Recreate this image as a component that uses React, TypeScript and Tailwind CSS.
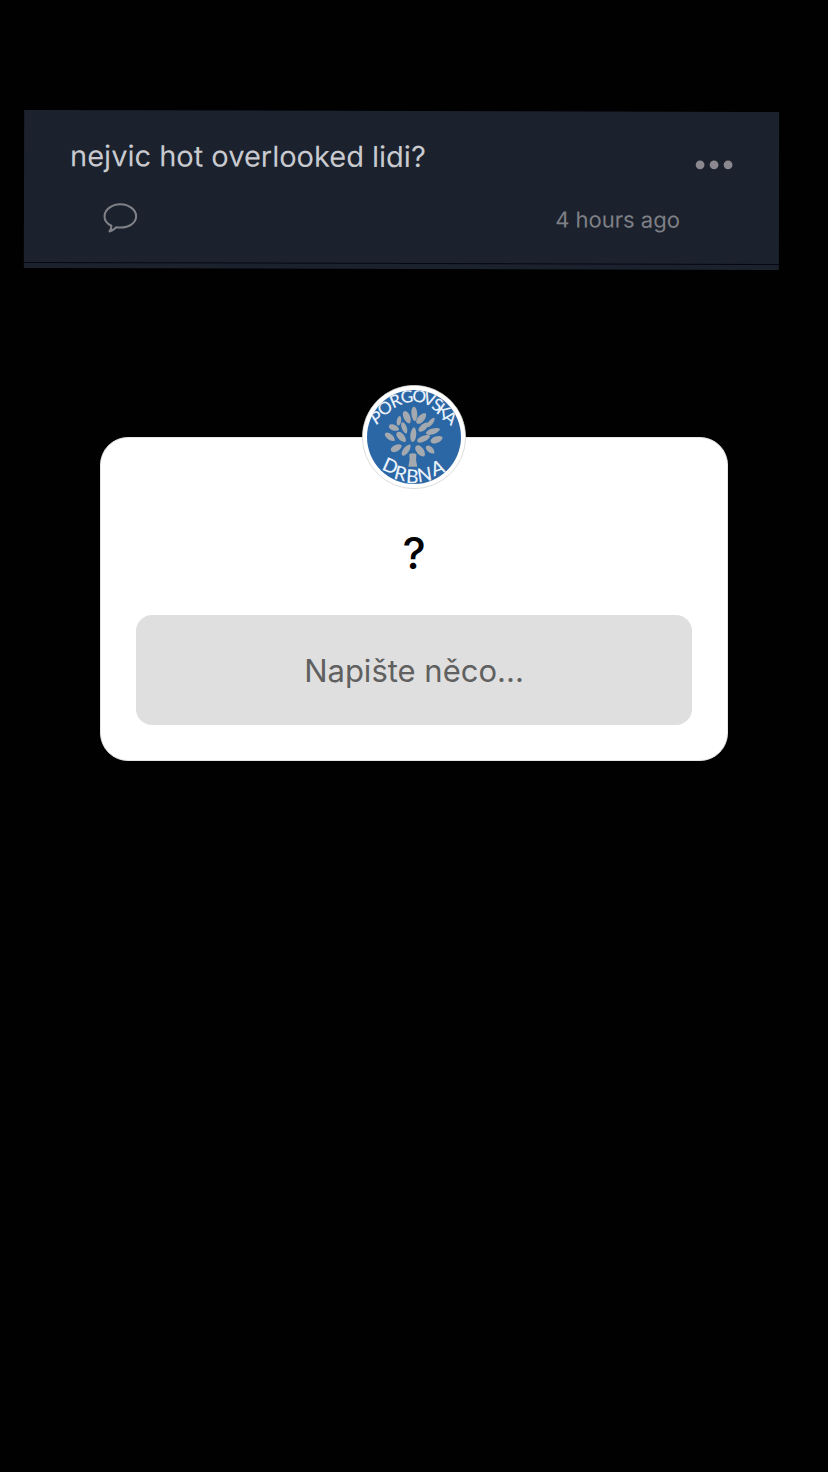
type Glyph = { char: string; x: number; y: number; turn: number };

const topLetters: Glyph[] = [
  { char: 'P', x: 90, y: 141, turn: -32 },
  { char: 'O', x: 115, y: 112, turn: -34 },
  { char: 'R', x: 144, y: 92, turn: -24 },
  { char: 'G', x: 173, y: 81, turn: -6 },
  { char: 'O', x: 206, y: 80, turn: 6 },
  { char: 'V', x: 233, y: 88, turn: 18 },
  { char: 'S', x: 254, y: 104, turn: 28 },
  { char: 'K', x: 270, y: 120, turn: 34 },
  { char: 'Á', x: 290, y: 141, turn: 38 },
];

const bottomLetters: Glyph[] = [
  { char: 'D', x: 113, y: 290, turn: 24 },
  { char: 'R', x: 147, y: 313, turn: 14 },
  { char: 'B', x: 186, y: 323, turn: 3 },
  { char: 'N', x: 227, y: 317, turn: -9 },
  { char: 'A', x: 270, y: 296, turn: -20 },
];

// cx, cy, half length, half width, angle
const leaves: number[][] = [
  [193, 115, 22, 8, 86],
  [171, 125, 20, 9, 66],
  [214, 128, 20, 9, -48],
  [147, 135, 15, 6, -80],
  [243, 140, 17, 6, -52],
  [132, 156, 16, 8, 22],
  [163, 157, 18, 7, 70],
  [221, 154, 19, 8, -42],
  [249, 167, 22, 8, -18],
  [120, 184, 18, 8, 38],
  [154, 184, 19, 9, 48],
  [190, 177, 22, 8, -84],
  [221, 189, 21, 8, -24],
  [260, 192, 19, 9, -20],
  [139, 217, 18, 9, -28],
  [169, 223, 20, 8, -54],
  [211, 226, 20, 10, 52],
  [241, 222, 16, 8, 42],
];

function Letters({ glyphs, size }: { glyphs: Glyph[]; size: number }) {
  return (
    <g fontSize={size} textAnchor="middle" fill="#e9f1fa">
      {glyphs.map((g, i) => (
        <text key={i} transform={`translate(${g.x} ${g.y}) rotate(${g.turn})`}>
          {g.char}
        </text>
      ))}
    </g>
  );
}

function Avatar() {
  return (
    <svg viewBox="36 28 312 312" className="size-26 font-['Lato',sans-serif] font-medium" role="img" aria-label="Porgovská drbna">
      <defs>
        <clipPath id="disc">
          <circle cx="192" cy="184" r="141" />
        </clipPath>
      </defs>
      <circle cx="192" cy="184" r="155" fill="#fff" stroke="#c9cbc8" strokeWidth="2" />
      <circle cx="192" cy="184" r="141" fill="#2b66a5" />
      <g clipPath="url(#disc)">
        <g fill="#a3a9af">
          {leaves.map(([x, y, a, b, t], i) => (
            <path
              key={i}
              transform={`translate(${x} ${y}) rotate(${t})`}
              d={`M${-a} 0C${-a} ${-b * 1.4} ${a * 0.7} ${-b * 1.5} ${a} 0C${a * 0.7} ${b * 1.5} ${-a} ${b * 1.4} ${-a} 0Z`}
            />
          ))}
          <path d="M178 235Q189 231 199 235Q196 253 202 273L175 273Q181 255 178 235Z" />
        </g>
        <Letters glyphs={topLetters} size={52} />
        <Letters glyphs={bottomLetters} size={58} />
      </g>
    </svg>
  );
}

export default function App() {
  return (
    <main className="min-h-screen bg-[#010102] pt-[111px] font-['Inter','Liberation_Sans',sans-serif]">
      <article className="mr-[49px] ml-6 rotate-[0.15deg] bg-[#1c222d] text-[#7f8086]">
        <div className="flex h-[153px] flex-col justify-between border-b border-[#050714] pt-6 pb-7 pl-[46px]">
          <div className="flex items-start justify-between pr-[46px]">
            <h1 className="text-[29px] leading-11 text-[#c8cad0]">nejvic hot overlooked lidi?</h1>
            <button type="button" aria-label="More options" className="mt-6">
              <svg viewBox="0 0 38 10" className="h-[10px] w-[38px]" fill="#8b898f">
                <circle cx="5" cy="5" r="4.4" />
                <circle cx="19" cy="5" r="4.4" />
                <circle cx="33" cy="5" r="4.4" />
              </svg>
            </button>
          </div>
          <div className="flex items-center justify-between pr-[99px] pl-8">
            <button type="button" aria-label="Comment">
              <svg viewBox="0 0 36 32" className="h-8 w-9" fill="none" stroke="#808187" strokeWidth="2" strokeLinejoin="round">
                <path d="M9.5 23.5C5 21.4 2.6 18 2.6 14.2C2.6 7.7 9.5 2 18.3 2S34.2 7.6 34.2 14S27.5 25.3 18.6 25.3Q16.4 25.3 14.4 25Q11.8 27.8 7.6 29.2Q9.7 26.8 9.5 23.5Z" />
              </svg>
            </button>
            <time className="text-[22px] leading-8">4 hours ago</time>
          </div>
        </div>
        <div className="h-[5px]" />
      </article>

      <form className="mx-[100px] mt-[116px] flex flex-col items-center" onSubmit={(e) => e.preventDefault()}>
        <div className="z-10 -mb-13">
          <Avatar />
        </div>
        <div className="w-full rounded-[28px] border border-[#e4e6e4] bg-white px-[35px] pt-[85px] pb-[35px]">
          <label htmlFor="answer" className="block text-center text-[44px] leading-[60px] font-medium text-black">
            ?
          </label>
          <input
            id="answer"
            type="text"
            placeholder="Napište něco..."
            className="mt-8 block h-[110px] w-full rounded-2xl bg-[#dfdfdf] text-center text-[31px] text-[#606060] outline-none placeholder:text-[#606060] placeholder:opacity-100"
          />
        </div>
      </form>
    </main>
  );
}
